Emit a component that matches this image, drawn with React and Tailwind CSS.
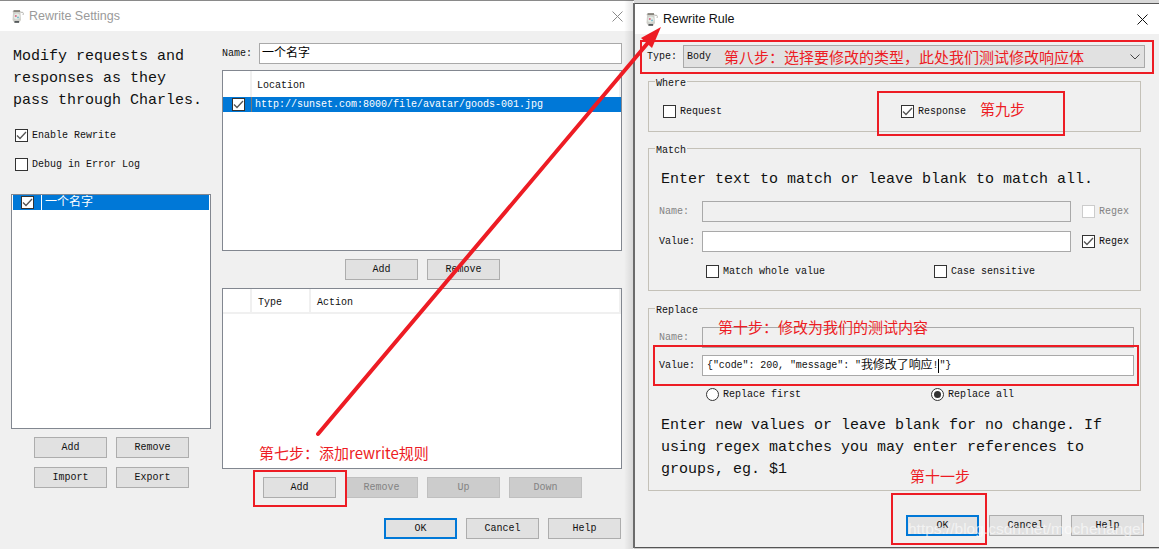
const mono = "font-['Liberation_Mono','Noto_Sans_CJK_SC',monospace]"

function Check({ checked, disabled, radio, className = '' }) {
  if (radio) {
    return (
      <span className={`w-[13px] h-[13px] rounded-full border border-[#333] bg-white flex items-center justify-center shrink-0 ${className}`}>
        {checked && <span className="w-[7px] h-[7px] rounded-full bg-[#333]" />}
      </span>
    )
  }
  return (
    <span className={`w-[13px] h-[13px] border flex items-center justify-center shrink-0 bg-white ${disabled ? 'border-[#ccc]' : 'border-[#333]'} ${className}`}>
      {checked && (
        <svg width="11" height="11" viewBox="0 0 11 11" fill="none">
          <path d="M1 5.5L4 8.5L10 2" stroke="#555" strokeWidth="1.3" />
        </svg>
      )}
    </span>
  )
}

function Label({ children, disabled, className = '' }) {
  return <span className={`text-[10px] leading-[13px] whitespace-pre ${disabled ? 'text-[#838383]' : 'text-[#111]'} ${className}`}>{children}</span>
}

function CheckRow({ label, checked, disabled, radio, className = '' }) {
  return (
    <div className={`flex items-center gap-[4px] ${className}`}>
      <Check checked={checked} disabled={disabled} radio={radio} />
      <Label disabled={disabled}>{label}</Label>
    </div>
  )
}

function Btn({ children, disabled, focus, className = '' }) {
  let look = 'border border-[#adadad] bg-[#e1e1e1] text-[#111]'
  if (disabled) look = 'border border-[#bfbfbf] bg-[#cccccc] text-[#838383]'
  if (focus) look = 'border-2 border-[#0078d7] bg-[#e1e1e1] text-[#111]'
  return (
    <div className={`w-[73px] h-[21px] flex items-center justify-center text-[10px] ${look} ${className}`}>
      {children}
    </div>
  )
}

function Field({ children, disabled, className = '' }) {
  return (
    <div className={`h-[21px] border border-[#a9a9a9] flex items-center px-[2px] text-[10px] whitespace-pre ${disabled ? 'bg-[#f0f0f0]' : 'bg-white'} ${className}`}>
      {children}
    </div>
  )
}

function TitleBar({ title, titleColor, closeColor }) {
  return (
    <div className="h-[30px] bg-white flex items-center pl-[10px] pr-[11px] shrink-0">
      <svg width="15" height="15" viewBox="0 0 15 15">
        <path d="M10.5 3.5C13 2.5 14 4 13 6" fill="none" stroke="#b5b5b0" strokeWidth="1" />
        <path d="M2.5 2h8.5l-0.5 2 0.5 7-2 3H4.5l-2-3 0.5-7z" fill="#cfcfca" />
        <path d="M3.5 1.2h6.5v1.6H3.5z" fill="#77736b" />
        <circle cx="6.8" cy="7.5" r="3" fill="#e4ece6" />
        <circle cx="5.8" cy="7" r="1.1" fill="#d66f88" />
        <circle cx="8" cy="8.4" r="0.9" fill="#6fb5c9" />
        <path d="M4.5 12h4.5v1.8H4.5z" fill="#54595c" />
      </svg>
      <span className={`ml-[4px] text-[12.5px] font-['Liberation_Sans',sans-serif] ${titleColor}`}>{title}</span>
      <svg className="ml-auto" width="11" height="11" viewBox="0 0 11 11" stroke={closeColor} strokeWidth="1">
        <path d="M0.5 0.5L10.5 10.5M10.5 0.5L0.5 10.5" />
      </svg>
    </div>
  )
}

function Group({ title, className = '', children }) {
  return (
    <fieldset className={`border border-[#c4c1b8] mx-[14px] w-[493px] ${className}`}>
      <legend className="text-[10px] leading-[10px] text-[#111] ml-[6px] px-[1px] translate-y-[3px]">{title}</legend>
      {children}
    </fieldset>
  )
}

function Note({ children, className = '' }) {
  return <div className={`absolute text-[15px] leading-[20px] text-[#ed1c24] whitespace-nowrap font-['Noto_Sans_CJK_SC',sans-serif] ${className}`}>{children}</div>
}

function Box({ className = '' }) {
  return <div className={`absolute border-2 border-[#ed1c24] ${className}`} />
}

function SettingsWindow() {
  return (
    <div className="w-[634px] h-[549px] shrink-0 flex flex-col pt-px bg-[#8a8a8a]">
      <TitleBar title="Rewrite Settings" titleColor="text-[#9a9a9a]" closeColor="#8a8a8a" />
      <div className="flex-1 bg-[#f0f0f0] flex">
        <div className="w-[222px] shrink-0 pt-[15px] pl-[11px]">
          <p className="text-[15px] leading-[22px] pl-[2px] text-[#111] whitespace-pre">{'Modify requests and\nresponses as they\npass through Charles.'}</p>
          <CheckRow label="Enable Rewrite" checked className="ml-[4px] mt-[17px]" />
          <CheckRow label="Debug in Error Log" className="ml-[4px] mt-[16px]" />
          <div className="w-[200px] h-[235px] mt-[23px] border border-[#828790] bg-white">
            <div className="h-[15px] flex items-center bg-[#0078d7] text-white text-[12px] mx-px">
              <div className="w-[29px] pl-[8px] border-r border-white h-full flex items-center">
                <Check checked />
              </div>
              <span className="ml-[3px] pt-px">一个名字</span>
            </div>
          </div>
          <div className="w-[155px] ml-[23px] mt-[8px] grid grid-cols-2 gap-x-[9px] gap-y-[9px]">
            <Btn>Add</Btn>
            <Btn>Remove</Btn>
            <Btn>Import</Btn>
            <Btn>Export</Btn>
          </div>
        </div>

        <div className="w-[400px] shrink-0 pt-[12px]">
          <div className="flex items-center h-[21px]">
            <Label className="w-[37px]">Name:</Label>
            <Field className="w-[363px] text-[12px]">一个名字</Field>
          </div>
          <div className="h-[181px] mt-[6px] border border-[#828790] bg-white">
            <div className="h-[26px] flex text-[10px] text-[#111]">
              <div className="w-[29px] border-r-2 border-[#f0f0f0]" />
              <div className="flex-1 flex items-center pl-[5px] pt-[2px] border-r-2 border-[#f0f0f0]">Location</div>
            </div>
            <div className="h-[15px] flex items-center bg-[#0078d7] text-white text-[10px]">
              <div className="w-[29px] pl-[9px] border-r border-[#777] h-full flex items-center">
                <Check checked />
              </div>
              <span className="ml-[3px]">http://sunset.com:8000/file/avatar/goods-001.jpg</span>
            </div>
          </div>
          <div className="flex justify-center gap-[9px] mt-[8px] pl-[1px]">
            <Btn>Add</Btn>
            <Btn>Remove</Btn>
          </div>
          <div className="h-[181px] mt-[8px] border border-[#828790] bg-white">
            <div className="h-[25px] flex text-[10px] text-[#111] border-b-2 border-[#f0f0f0]">
              <div className="w-[29px] border-r-2 border-[#f0f0f0]" />
              <div className="w-[59px] flex items-center pl-[6px] pt-[4px] border-r-2 border-[#f0f0f0]">Type</div>
              <div className="flex-1 flex items-center pl-[6px] pt-[4px] border-r-2 border-[#f0f0f0]">Action</div>
            </div>
          </div>
          <div className="flex gap-[9px] mt-[8px] ml-[41px]">
            <Btn>Add</Btn>
            <Btn disabled className="w-[72px]">Remove</Btn>
            <Btn disabled>Up</Btn>
            <Btn disabled>Down</Btn>
          </div>
          <div className="flex gap-[9px] mt-[20px] justify-end mr-px">
            <Btn focus>OK</Btn>
            <Btn>Cancel</Btn>
            <Btn>Help</Btn>
          </div>
        </div>
      </div>
    </div>
  )
}

function RuleWindow() {
  return (
    <div className="w-[525px] h-[549px] shrink-0 flex flex-col bg-[#c9c9c9]">
      <div className="h-[4px] bg-[#d8d8d8] border-b border-[#555] shrink-0" />
      <TitleBar title="Rewrite Rule" titleColor="text-[#111]" closeColor="#111" />
      <div className="h-[514px] bg-[#f0f0f0] border-b border-[#555]">
        <div className="flex items-center h-[23px] mt-[11px] pl-[13px]">
          <Label className="w-[36px]">Type:</Label>
          <div className="w-[462px] h-[23px] border border-[#a9a9a9] bg-[#e1e1e1] flex items-center pl-[3px] pr-[4px] text-[10px] text-[#111]">
            Body
            <svg className="ml-auto" width="10" height="6" viewBox="0 0 10 6" fill="none" stroke="#444">
              <path d="M0.5 0.5L5 5L9.5 0.5" />
            </svg>
          </div>
        </div>

        <Group title="Where" className="h-[56px] mt-[8px]">
          <div className="flex items-center pt-[19px]">
            <CheckRow label="Request" className="ml-[14px] w-[238px]" />
            <CheckRow label="Response" checked />
          </div>
        </Group>

        <Group title="Match" className="h-[148px] mt-[11px]">
          <p className="text-[15px] leading-[20px] pl-[12px] pt-[17px] text-[#111] whitespace-pre">Enter text to match or leave blank to match all.</p>
          <div className="flex items-center mt-[11px] pl-[10px]">
            <Label disabled className="w-[43px]">Name:</Label>
            <Field disabled className="w-[369px]" />
            <CheckRow label="Regex" disabled className="ml-[11px]" />
          </div>
          <div className="flex items-center mt-[9px] pl-[10px]">
            <Label className="w-[43px]">Value:</Label>
            <Field className="w-[369px]" />
            <CheckRow label="Regex" checked className="ml-[11px]" />
          </div>
          <div className="flex items-center mt-[13px] pl-[57px]">
            <CheckRow label="Match whole value" className="w-[228px]" />
            <CheckRow label="Case sensitive" />
          </div>
        </Group>

        <Group title="Replace" className="h-[188px] mt-[12px]">
          <div className="flex items-center mt-[14px] pl-[10px]">
            <Label disabled className="w-[43px]">Name:</Label>
            <Field disabled className="w-[432px]" />
          </div>
          <div className="flex items-center mt-[7px] pl-[10px]">
            <Label className="w-[43px]">Value:</Label>
            <Field className="w-[432px] text-[#111] pl-[4px] tracking-[-0.08px]">
              {'{"code": 200, "message": "'}<span className="text-[12px]">我修改了响应</span>{'!'}<span className="inline-block w-px h-[14px] bg-black" />{'"}'}
            </Field>
          </div>
          <div className="flex items-center mt-[12px] pl-[57px]">
            <CheckRow label="Replace first" radio className="w-[225px]" />
            <CheckRow label="Replace all" radio checked />
          </div>
          <p className="text-[15px] leading-[22px] pl-[12px] pt-[14px] text-[#111] whitespace-pre">{'Enter new values or leave blank for no change. If\nusing regex matches you may enter references to\ngroups, eg. $1'}</p>
        </Group>

        <div className="flex justify-end gap-[9px] mt-[24px] pr-[15px]">
          <Btn focus className="w-[71px] mr-px">OK</Btn>
          <Btn className="w-[72px]">Cancel</Btn>
          <Btn className="w-[72px]">Help</Btn>
        </div>
      </div>
    </div>
  )
}

export default function App() {
  return (
    <div className={`relative w-[1159px] h-[549px] overflow-hidden flex ${mono}`}>
      <SettingsWindow />
      <RuleWindow />

      {/* shadow and edge of the front window */}
      <div className="absolute left-[624px] top-0 w-[9px] h-full bg-gradient-to-r from-transparent to-black/10" />
      <div className="absolute left-[633px] top-[3px] w-[2px] h-[545px] bg-[#6b6b6b]" />

      {/* red annotations drawn over the windows */}
      <svg className="absolute inset-0 pointer-events-none" width="1159" height="549">
        <path d="M318 434L652 38" stroke="#ed1c24" strokeWidth="4" strokeLinecap="round" />
        <path d="M661 27L641 38L652 48z" fill="#ed1c24" />
      </svg>
      <Box className="left-[253px] top-[470px] w-[94px] h-[37px]" />
      <Box className="left-[640px] top-[40px] w-[514px] h-[34px]" />
      <Box className="left-[877px] top-[91px] w-[188px] h-[45px]" />
      <Box className="left-[653px] top-[345px] w-[486px] h-[41px]" />
      <Box className="left-[891px] top-[493px] w-[96px] h-[52px]" />
      <Note className="left-[259px] top-[443px]">第七步：添加rewrite规则</Note>
      <Note className="left-[724px] top-[47px]">第八步：选择要修改的类型，此处我们测试修改响应体</Note>
      <Note className="left-[980px] top-[99px]">第九步</Note>
      <Note className="left-[718px] top-[317px]">第十步：修改为我们的测试内容</Note>
      <Note className="left-[910px] top-[466px]">第十一步</Note>
      <div className="absolute left-[908px] top-[517px] text-[15.5px] leading-[24px] text-white/60 font-['Liberation_Sans',sans-serif] whitespace-nowrap">https://blog.csdn.net/mochenangel</div>
    </div>
  )
}
